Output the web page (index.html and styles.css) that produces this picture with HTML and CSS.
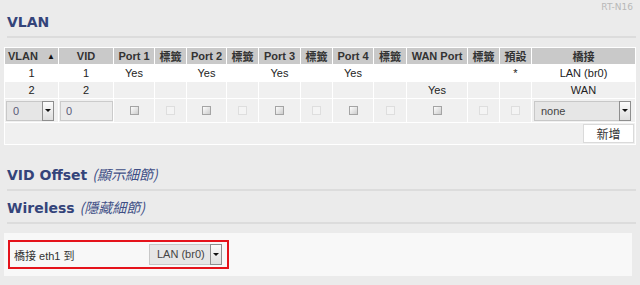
FILE: index.html
```html
<!DOCTYPE html>
<html lang="zh-Hant">
<head>
  <meta charset="UTF-8">
  <meta name="viewport" content="width=device-width, initial-scale=1.0">
  <title>VLAN</title>
  <link rel="stylesheet" href="styles.css">
</head>
<body>
  <div class="page">

    <div class="sec-head first">
      <h2 class="sec-title">VLAN</h2>
      <span class="model">RT-N16</span>
    </div>

    <table class="vlan-grid">
      <colgroup>
        <col style="width:54px"><col style="width:55px">
        <col style="width:41px"><col style="width:32px">
        <col style="width:40px"><col style="width:32px">
        <col style="width:42px"><col style="width:32px">
        <col style="width:41px"><col style="width:33px">
        <col style="width:61px"><col style="width:32px">
        <col style="width:32px"><col style="width:104px">
      </colgroup>
      <thead>
        <tr>
          <th>VLAN&nbsp;&nbsp;&nbsp;<span class="sort">&#9650;</span></th>
          <th>VID</th>
          <th>Port 1</th><th>標籤</th>
          <th>Port 2</th><th>標籤</th>
          <th>Port 3</th><th>標籤</th>
          <th>Port 4</th><th>標籤</th>
          <th>WAN Port</th><th>標籤</th>
          <th>預設</th>
          <th>橋接</th>
        </tr>
      </thead>
      <tbody>
        <tr class="row-on">
          <td>1</td><td>1</td>
          <td>Yes</td><td></td>
          <td>Yes</td><td></td>
          <td>Yes</td><td></td>
          <td>Yes</td><td></td>
          <td></td><td></td>
          <td>*</td>
          <td>LAN (br0)</td>
        </tr>
        <tr class="row-off">
          <td>2</td><td>2</td>
          <td></td><td></td>
          <td></td><td></td>
          <td></td><td></td>
          <td></td><td></td>
          <td>Yes</td><td></td>
          <td></td>
          <td>WAN</td>
        </tr>
        <tr class="edit-row">
          <td class="left">
            <div class="pick pick-vlan"><span class="pick-val">0</span><span class="pick-btn"></span></div>
          </td>
          <td class="left"><input class="vid-input" type="text" value="0"></td>
          <td><input type="checkbox"></td><td><input type="checkbox" disabled></td>
          <td><input type="checkbox"></td><td><input type="checkbox" disabled></td>
          <td><input type="checkbox"></td><td><input type="checkbox" disabled></td>
          <td><input type="checkbox"></td><td><input type="checkbox" disabled></td>
          <td><input type="checkbox"></td><td><input type="checkbox" disabled></td>
          <td><input type="checkbox" disabled></td>
          <td class="left">
            <div class="pick pick-none"><span class="pick-val">none</span><span class="pick-btn"></span></div>
          </td>
        </tr>
        <tr class="add-row">
          <td colspan="14"><button class="add-btn" type="button">新增</button></td>
        </tr>
      </tbody>
    </table>

    <div class="sec-head second">
      <h2 class="sec-title">VID Offset <span class="toggle">(顯示細節)</span></h2>
    </div>

    <div class="sec-head third">
      <h2 class="sec-title">Wireless <span class="toggle">(隱藏細節)</span></h2>
    </div>

    <div class="panel">
      <div class="bridge-box">
        <span class="bridge-label">橋接 eth1 到</span>
        <div class="pick pick-bridge"><span class="pick-val">LAN (br0)</span><span class="pick-btn"></span></div>
      </div>
    </div>

  </div>
</body>
</html>
```

FILE: styles.css
```css
/* page basics */
body {
    margin: 0;
    background: #ebebeb;
    color: #222;
    font-family: "Liberation Sans", "Noto Sans CJK TC", sans-serif;
    font-size: 11px;
}
.page {
    padding-top: 2px;
}

/* section headings with the grey rule under them */
.sec-head {
    display: flex;
    justify-content: space-between;
    align-items: flex-start;
    margin: 0 4px 0 7px;
    border-bottom: 2px solid #dcdcdc;
}
.sec-head.second {
    margin-top: 19px;
}
.sec-head.third {
    margin-top: 6px;
}
.sec-title {
    margin: 0;
    padding-bottom: 4px;
    font: bold 14px/20px "DejaVu Sans", "Noto Sans CJK TC", sans-serif;
    color: #34447a;
}
.first .sec-title {
    margin-top: 10px;
}
.toggle {
    font: italic 14px/20px "Noto Sans CJK TC", sans-serif;
    color: #404f86;
}
.model {
    margin-right: 3px;
    font: 9px/11px "DejaVu Sans", sans-serif;
    color: #b8b8b8;
}

/* the vlan table */
.vlan-grid {
    margin: 9px 0 0 4px;
    width: 631px;
    table-layout: fixed;
    border-collapse: collapse;
    background: #f0f0f0;
}
.vlan-grid th,
.vlan-grid td {
    border: 1px solid #fff;
    padding: 0;
    text-align: center;
    white-space: nowrap;
}
.vlan-grid th {
    height: 14px;
    background: #c9c9c9;
    color: #333;
    font-weight: bold;
}
.sort {
    font-size: 8px;
    vertical-align: 1px;
    color: #111;
}
.row-on td {
    height: 16px;
    background: #fff;
}
.row-off td {
    height: 16px;
}
.edit-row td {
    height: 23px;
}
.edit-row td.left {
    text-align: left;
    padding-left: 1px;
}
.edit-row td:last-child {
    padding-left: 2px;
}
.add-row td {
    height: 21px;
    text-align: right;
    padding-right: 1px;
}

/* fake select boxes */
.pick {
    display: flex;
    box-sizing: border-box;
    height: 20px;
    border: 1px solid #c8c8c8;
    background: #e6e6e6;
    text-align: left;
}
.pick-val {
    flex: 1;
    padding-left: 6px;
    line-height: 18px;
    color: #444;
}
.pick-btn {
    display: flex;
    align-items: center;
    justify-content: center;
    width: 10px;
    margin: -1px -1px -1px 0;
    border: 1px solid #8e8e8e;
    background: linear-gradient(#fbfbfb, #dedede);
}
.pick-btn::after {
    content: "";
    border-left: 3px solid transparent;
    border-right: 3px solid transparent;
    border-top: 3px solid #111;
}
.pick-vlan {
    width: 48px;
}
.pick-vlan .pick-val {
    color: #5a5a78;
}
.pick-none {
    width: 97px;
}
.pick-bridge {
    width: 73px;
    height: 21px;
}
.pick-bridge .pick-val {
    line-height: 19px;
    padding-left: 7px;
}

.vid-input {
    box-sizing: border-box;
    width: 53px;
    height: 20px;
    margin: 0;
    padding: 0 0 0 5px;
    border: 1px solid #cbcbcb;
    background: #ebebeb;
    font: 11px "Liberation Sans", sans-serif;
    color: #5a5a78;
}

input[type="checkbox"] {
    appearance: none;
    display: block;
    box-sizing: border-box;
    width: 9px;
    height: 9px;
    margin: 0 auto;
    border: 1px solid #a4a4a4;
    background: linear-gradient(135deg, #fdfdfd, #cdcdcd);
}
input[type="checkbox"]:disabled {
    border-color: #dedede;
    background: #f4f4f4;
}

.add-btn {
    box-sizing: border-box;
    width: 51px;
    height: 19px;
    padding: 0;
    border: 1px solid #dadada;
    background: #fff;
    font: 12px "Noto Sans CJK TC", sans-serif;
    color: #333;
}

/* wireless bridge panel */
.panel {
    margin: 9px 8px 0 4px;
    padding: 7px 4px;
    background: #f8f8f8;
}
.bridge-box {
    display: flex;
    align-items: center;
    justify-content: space-between;
    box-sizing: border-box;
    width: 221px;
    height: 29px;
    padding: 0 5px 0 4px;
    border: 2px solid #e5131b;
}
.bridge-label {
    color: #333;
}
```
